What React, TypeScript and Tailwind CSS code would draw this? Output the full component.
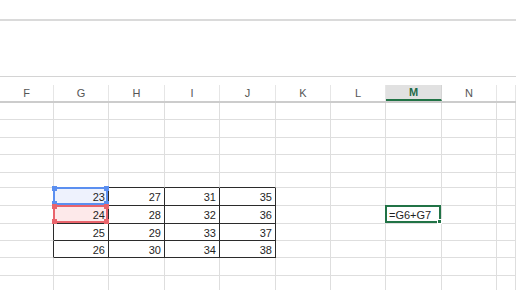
import React from 'react';

// Column widths include the 1px right gridline
const COLS = [
  { id: 'F', w: 'w-[54px]' },
  { id: 'G', w: 'w-[55px]' },
  { id: 'H', w: 'w-[56px]' },
  { id: 'I', w: 'w-[55px]' },
  { id: 'J', w: 'w-[56px]' },
  { id: 'K', w: 'w-[55px]' },
  { id: 'L', w: 'w-[55px]' },
  { id: 'M', w: 'w-[56px]' },
  { id: 'N', w: 'w-[55px]' },
  { id: '', w: 'flex-1' },
];

// Row heights include the 1px bottom gridline
const ROWS = [
  'h-[17px]',
  'h-[18px]',
  'h-[17px]',
  'h-[18px]',
  'h-[15px]',
  'h-[18px]',
  'h-[18px]',
  'h-[17px]',
  'h-[17px]',
  'h-[18px]',
  'h-[17px]',
];

const TABLE_TOP = 5;
const TABLE_BOTTOM = 8;

const valueAt = (r: number, c: number): string => {
  if (r < TABLE_TOP || r > TABLE_BOTTOM || c < 1 || c > 4) return '';
  return String(23 + (c - 1) * 4 + (r - TABLE_TOP));
};

const Handle: React.FC<{ pos: string; color: string }> = ({ pos, color }) => (
  <span className={`absolute w-[5px] h-[5px] ${pos} ${color}`} />
);

// Coloured range outline Excel draws for formula references
const RefBox: React.FC<{ kind: 'blue' | 'red' }> = ({ kind }) => {
  const box =
    kind === 'blue'
      ? 'border-[#5b8ff0] bg-[#eef2fd]'
      : 'border-[#e9646c] bg-[#fde9ea]';
  const dot = kind === 'blue' ? 'bg-[#5b8ff0]' : 'bg-[#e9646c]';
  return (
    <div className={`absolute -left-[1px] -top-[1px] right-0 bottom-0 border-2 ${box}`}>
      <Handle pos="-left-[3px] -top-[3px]" color={dot} />
      <Handle pos="-right-[3px] -top-[3px]" color={dot} />
      <Handle pos="-left-[3px] -bottom-[3px]" color={dot} />
      <Handle pos="-right-[3px] -bottom-[3px]" color={dot} />
    </div>
  );
};

const Cell: React.FC<{ r: number; c: number }> = ({ r, c }) => {
  const inTableRows = r >= TABLE_TOP && r <= TABLE_BOTTOM;
  const rightDark = inTableRows && c <= 4;
  const bottomDark = c >= 1 && c <= 4 && r >= TABLE_TOP - 1 && r <= TABLE_BOTTOM;
  const value = valueAt(r, c);
  const isBlue = r === 5 && c === 1;
  const isRed = r === 6 && c === 1;
  const isActive = r === 6 && c === 7;

  return (
    <div
      className={`relative shrink-0 h-full flex items-center border-r border-b ${COLS[c].w} ${
        rightDark ? 'border-r-[#2b2b2b]' : 'border-r-[#dedede]'
      } ${bottomDark ? 'border-b-[#2b2b2b]' : 'border-b-[#dedede]'}`}
    >
      {isBlue && <RefBox kind="blue" />}
      {isRed && <RefBox kind="red" />}
      {value && (
        <span className="relative w-full text-right pr-[3px] text-[11px] text-[#1f1f1f] leading-none pt-[2px]">
          {value}
        </span>
      )}
      {isActive && (
        <div className="absolute -left-[1px] -top-[1px] right-0 bottom-0 border-2 border-[#217346] flex items-center pl-[2px]">
          <span className="text-[11px] text-[#1f1f1f] leading-none pt-[2px]">=G6+G7</span>
          <span className="absolute -right-[3px] -bottom-[3px] w-[5px] h-[5px] bg-[#217346] border border-white" />
        </div>
      )}
    </div>
  );
};

export default function App() {
  return (
    <div className="w-[516px] h-[290px] overflow-hidden bg-white font-['Liberation_Sans',Arial,sans-serif]">
      {/* Ribbon / formula bar edges */}
      <div className="h-[19px]" />
      <div className="h-[2px] bg-[#dadada]" />
      <div className="h-[55px]" />
      <div className="h-[1px] bg-[#d4d4d4]" />
      <div className="h-[8px]" />

      {/* Column headers */}
      <div className="flex h-[18px] border-b-2 border-[#cccccc]">
        {COLS.map((col, c) => {
          const selected = col.id === 'M';
          return (
            <div
              key={c}
              className={`shrink-0 h-full flex items-center justify-center border-r text-[11px] leading-none ${col.w} ${
                selected
                  ? 'bg-[#e1e1e1] border-r-[#d4d4d4] border-b-2 border-b-[#217346] font-bold text-[#1f6b49]'
                  : 'border-r-[#e6e6e6] text-[#555555]'
              }`}
            >
              <span className="pt-[1px]">{col.id}</span>
            </div>
          );
        })}
      </div>

      {/* Grid */}
      {ROWS.map((h, r) => (
        <div key={r} className={`flex ${h}`}>
          {COLS.map((_, c) => (
            <Cell key={c} r={r} c={c} />
          ))}
        </div>
      ))}
    </div>
  );
}
